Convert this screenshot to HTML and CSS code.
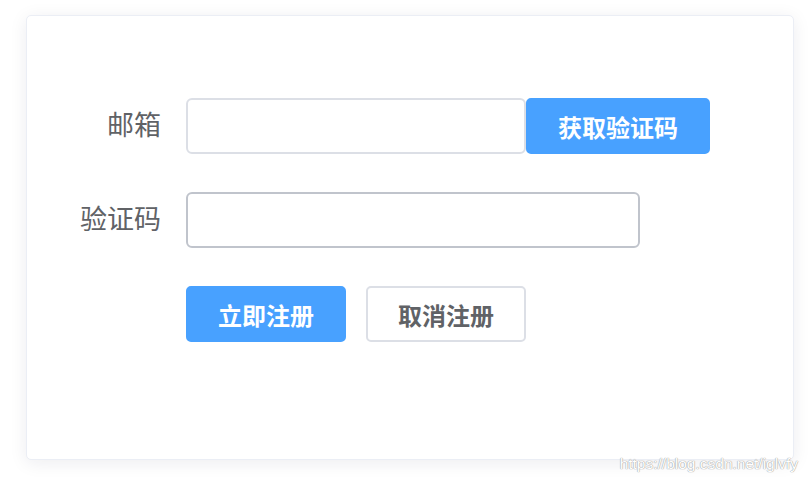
FILE: index.html
```html
<!DOCTYPE html>
<html lang="zh">
<head>
<meta charset="utf-8">
<link rel="stylesheet" href="styles.css">
</head>
<body>
<div class="card">
  <form class="form">
    <div class="row">
      <label class="label">邮箱</label>
      <input class="input input-email" type="text">
      <button type="button" class="btn btn-primary btn-code">获取验证码</button>
    </div>
    <div class="row">
      <label class="label">验证码</label>
      <input class="input input-code" type="text">
    </div>
    <div class="row actions">
      <button type="button" class="btn btn-primary">立即注册</button>
      <button type="button" class="btn btn-default">取消注册</button>
    </div>
  </form>
</div>
<div class="watermark">https://blog.csdn.net/iglvfy</div>
</body>
</html>
```
FILE: styles.css
```css
html, body {
  margin: 0;
  padding: 0;
  background: #ffffff;
  font-family: "Noto Sans CJK SC", "Noto Sans", sans-serif;
}
body {
  width: 808px;
  height: 482px;
  position: relative;
  overflow: hidden;
}
.card {
  box-sizing: border-box;
  margin: 15px 0 0 26px;
  width: 768px;
  height: 445px;
  background: #fff;
  border: 1px solid #ebeef5;
  border-radius: 5px;
  box-shadow: 0 3px 18px rgba(20, 20, 60, 0.08);
  padding-top: 82px;
}
.form {
  display: flex;
  flex-direction: column;
  gap: 38px;
}
.row {
  display: flex;
  align-items: center;
  height: 56px;
}
.label {
  box-sizing: border-box;
  width: 159px;
  padding-right: 25px;
  text-align: right;
  font-size: 27px;
  color: #606266;
  line-height: 56px;
  margin-top: -4px;
}
.input {
  box-sizing: border-box;
  height: 56px;
  border: 2px solid #dcdfe6;
  border-radius: 6px;
  background: #fff;
  outline: none;
  padding: 0 16px;
}
.input-email { width: 340px; }
.input-code { width: 454px; border-color: #c0c4cc; }
.btn {
  box-sizing: border-box;
  height: 56px;
  border-radius: 5px;
  font-family: "Noto Sans CJK SC", sans-serif;
  font-size: 24px;
  font-weight: bold;
  padding: 0;
  cursor: pointer;
}
.btn-primary {
  background: #48a1ff;
  border: 2px solid #48a1ff;
  color: #fff;
}
.btn-default {
  background: #fff;
  border: 2px solid #dcdfe6;
  color: #606266;
}
.btn-code { width: 184px; }
.actions {
  padding-left: 159px;
  gap: 20px;
}
.actions .btn { width: 160px; }
.watermark {
  position: absolute;
  right: 10px;
  bottom: 9px;
  font-family: "Liberation Sans", Arial, sans-serif;
  font-size: 15.5px;
  color: #fff;
  text-shadow: 0 0 1px #9a9a9a, 0 0 1px #9a9a9a;
}
```
